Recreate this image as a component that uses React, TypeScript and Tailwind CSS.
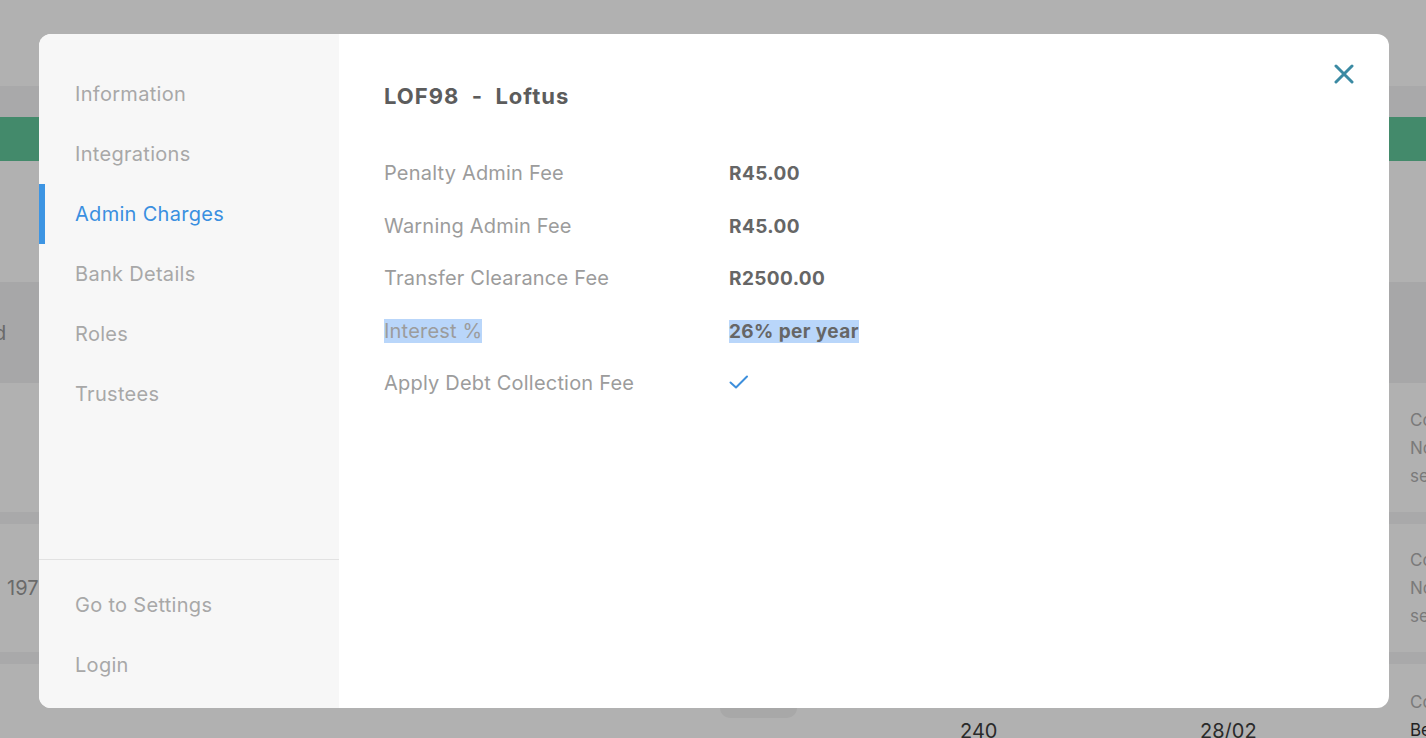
import React from "react";

const navTop = ["Information", "Integrations", "Admin Charges", "Bank Details", "Roles", "Trustees"];
const rows: { label: string; value: React.ReactNode; hl?: boolean }[] = [
  { label: "Penalty Admin Fee", value: "R45.00" },
  { label: "Warning Admin Fee", value: "R45.00" },
  { label: "Transfer Clearance Fee", value: "R2500.00" },
  { label: "Interest %", value: "26% per year", hl: true },
  { label: "Apply Debt Collection Fee", value: "check" },
];

export default function App() {
  return (
    <div
      className="relative w-[1426px] h-[738px] overflow-hidden bg-[#b1b1b1]"
      style={{ fontFamily: "Inter, 'Noto Sans', sans-serif" }}
    >
      {/* background page (dimmed) */}
      <div className="flex flex-col w-full">
        <div className="h-[86px] bg-[#b1b1b1]" />
        <div className="h-[31px] bg-[#a9a9aa]" />
        <div className="h-[44px] bg-[#438a6b]" />
        <div className="h-[121px] bg-[#b1b1b1]" />
        <div className="h-[101px] bg-[#a7a7a8] flex items-center text-[20px] text-[#6a6a6a]">
          <span className="ml-[-6px]">d</span>
        </div>
        <div className="h-[129px] bg-[#b1b1b1] flex justify-end items-center">
          <div className="w-[16px] overflow-hidden text-[17px] leading-[28px] text-[#7a7a7a] whitespace-nowrap">
            <div>Co</div>
            <div>No</div>
            <div>se</div>
          </div>
        </div>
        <div className="h-[12px] bg-[#a9a9aa]" />
        <div className="h-[128px] bg-[#b1b1b1] flex items-center justify-between">
          <span className="ml-[7px] text-[20px] text-[#6a6a6a]">197</span>
          <div className="w-[16px] overflow-hidden text-[17px] leading-[28px] text-[#7a7a7a] whitespace-nowrap">
            <div>Co</div>
            <div>No</div>
            <div>se</div>
          </div>
        </div>
        <div className="h-[12px] bg-[#a9a9aa]" />
        <div className="h-[74px] bg-[#b1b1b1] relative">
          <div className="absolute left-[720px] top-[30px] w-[77px] h-[24px] rounded-[10px] bg-[#a8a8a8]" />
          <div className="absolute left-[960px] top-[52px] text-[20px] text-[#2a2a2a]">240</div>
          <div className="absolute left-[1200px] top-[52px] text-[20px] text-[#2a2a2a]">28/02</div>
          <div className="absolute left-[1410px] top-[24px] w-[16px] overflow-hidden text-[17px] leading-[28px] whitespace-nowrap">
            <div className="text-[#7a7a7a]">Co</div>
            <div className="text-[#222]">Be</div>
          </div>
        </div>
      </div>

      {/* modal */}
      <div className="absolute left-[39px] top-[34px] w-[1350px] h-[674px] rounded-[12px] overflow-hidden flex bg-white">
        <aside className="w-[300px] bg-[#f7f7f7] flex flex-col">
          <nav className="pt-[30px] flex flex-col">
            {navTop.map((n) => {
              const active = n === "Admin Charges";
              return (
                <div key={n} className="relative h-[60px] flex items-center pl-[36px]">
                  {active && <div className="absolute left-0 top-0 h-[60px] w-[6px] bg-[#3d95e3]" />}
                  <span className={`text-[20px] tracking-[0.3px] ${active ? "text-[#3a8fe0]" : "text-[#a8a8a8]"}`}>{n}</span>
                </div>
              );
            })}
          </nav>
          <div className="flex-1" />
          <div className="border-t border-[#e2e2e2] pt-[15px] pb-[13px] flex flex-col">
            {["Go to Settings", "Login"].map((n) => (
              <div key={n} className="h-[60px] flex items-center pl-[36px]">
                <span className="text-[20px] tracking-[0.3px] text-[#a8a8a8]">{n}</span>
              </div>
            ))}
          </div>
        </aside>

        <main className="relative flex-1 pl-[45px] pt-[47px]">
          <button className="absolute right-[35px] top-[30px] w-[20px] h-[20px] flex items-center justify-center">
            <svg width="20" height="20" viewBox="0 0 20 20" fill="none">
              <path d="M2 2L18 18M18 2L2 18" stroke="#3b8aa3" strokeWidth="3" strokeLinecap="round" />
            </svg>
          </button>
          <h1 className="text-[22px] leading-[30px] font-bold tracking-[1px] text-[#5c5c5c] whitespace-pre">LOF98  -  Loftus</h1>
          <div className="mt-[36px] flex flex-col">
            {rows.map((r) => (
              <div key={r.label} className="h-[52.5px] flex items-center">
                <div className="w-[345px]">
                  <span className={`text-[20px] tracking-[0.2px] leading-[28px] text-[#9c9c9c] ${r.hl ? "bg-[#b9d6fa]" : ""}`}>{r.label}</span>
                </div>
                <div className="pt-[2px]">
                  {r.value === "check" ? (
                    <svg width="20" height="16" viewBox="0 0 20 16" fill="none" className="mt-[-4px]">
                      <path d="M1.5 8.5L7 13.5L18 2.5" stroke="#3d8fdc" strokeWidth="2" strokeLinecap="round" strokeLinejoin="round" />
                    </svg>
                  ) : (
                    <span className={`text-[19px] tracking-[0.4px] leading-[28px] font-bold text-[#666666] ${r.hl ? "bg-[#b9d6fa]" : ""}`}>{r.value}</span>
                  )}
                </div>
              </div>
            ))}
          </div>
        </main>
      </div>
    </div>
  );
}
